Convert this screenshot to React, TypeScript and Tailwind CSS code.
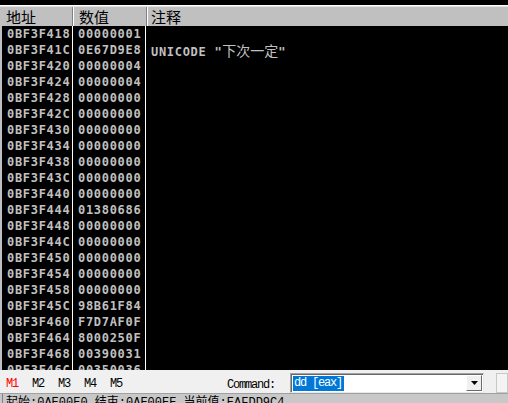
const rows: [string, string, string?][] = [
  ["0BF3F418", "00000001"],
  ["0BF3F41C", "0E67D9E8", "unicode"],
  ["0BF3F420", "00000004"],
  ["0BF3F424", "00000004"],
  ["0BF3F428", "00000000"],
  ["0BF3F42C", "00000000"],
  ["0BF3F430", "00000000"],
  ["0BF3F434", "00000000"],
  ["0BF3F438", "00000000"],
  ["0BF3F43C", "00000000"],
  ["0BF3F440", "00000000"],
  ["0BF3F444", "01380686"],
  ["0BF3F448", "00000000"],
  ["0BF3F44C", "00000000"],
  ["0BF3F450", "00000000"],
  ["0BF3F454", "00000000"],
  ["0BF3F458", "00000000"],
  ["0BF3F45C", "98B61F84"],
  ["0BF3F460", "F7D7AF0F"],
  ["0BF3F464", "8000250F"],
  ["0BF3F468", "00390031"],
  ["0BF3F46C", "00350036"],
]

const mono = "font-['DejaVu_Sans_Mono',monospace] font-bold text-[12px] tracking-[0.7px]"
const small = "font-['Liberation_Mono','Noto_Sans_CJK_SC',monospace] text-[12px] tracking-[-1.2px]"

export default function App() {
  return (
    <div className="w-[508px] h-[403px] overflow-hidden flex flex-col bg-black">
      {/* top strip */}
      <div className="h-[5px] shrink-0 bg-black" />
      <div className="h-[1px] shrink-0 bg-white" />
      <div className="h-[1px] shrink-0 bg-[#e3e3e3]" />

      {/* column header */}
      <div className="h-[19px] shrink-0 flex bg-[#c0c0c0] text-black font-['Noto_Sans_CJK_SC',sans-serif] text-[15px] leading-[19px]">
        <div className="w-[73px] pl-[6px] border-r border-[#808080]">地址</div>
        <div className="w-[74px] pl-[5px] border-l border-white border-r border-r-[#808080]">数值</div>
        <div className="flex-1 pl-[3px] border-l border-white">注释</div>
      </div>

      {/* dump rows */}
      <div className="flex-1 overflow-hidden flex flex-col border-l-2 border-[#c0c0c0] text-[#c0c0c0]">
        {rows.map(([addr, val, note]) => (
          <div key={addr} className={`h-[16px] shrink-0 flex leading-[16px] ${mono}`}>
            <div className="w-[71px] pl-[5px] border-r border-white">{addr}</div>
            <div className="w-[73px] pl-[5px] border-r border-white">{val}</div>
            <div className="flex-1 pl-[5px] whitespace-nowrap">
              {note && (
                <>
                  UNICODE "
                  <span className="font-['Noto_Sans_CJK_SC',sans-serif] font-normal text-[14px] tracking-normal">下次一定</span>
                  "
                </>
              )}
            </div>
          </div>
        ))}
      </div>

      {/* toolbar */}
      <div className="h-[23px] shrink-0 flex bg-[#f0f0f0]">
        <div className={`flex items-center pl-[6px] pt-[4px] gap-[14px] text-black ${small}`}>
          <span className="text-[#ff0000]">M1</span>
          <span>M2</span>
          <span>M3</span>
          <span>M4</span>
          <span>M5</span>
        </div>
        <span className={`ml-[105px] self-center mt-[6px] text-black ${small}`}>Command:</span>
        <div className="ml-[15px] self-end w-[198px] h-[20px] flex items-center bg-white border border-t-[#a0a0a0] border-l-[#a0a0a0] border-r-[#e8e8e8] border-b-[#e8e8e8] shadow-[inset_1px_1px_0_#696969]">
          <span className={`ml-[2px] pl-[1px] pr-[2px] bg-[#0078d7] text-white leading-[15px] ${small}`}>dd [eax]</span>
          <div className="ml-auto mr-[1px] w-[16px] h-[16px] flex items-center justify-center bg-[#f0f0f0] border border-t-white border-l-white border-r-[#696969] border-b-[#696969]">
            <svg width="7" height="4" viewBox="0 0 7 4">
              <path d="M0 0h7L3.5 4z" fill="#000" />
            </svg>
          </div>
        </div>
        <div className="ml-[12px] self-end w-[12px] h-[20px] border border-[#c8c8c8] bg-[#f4f4f4]" />
      </div>

      {/* status bar, clipped by the window edge */}
      <div className="h-[10px] shrink-0 overflow-hidden bg-[#c8c8c8] border-t border-[#a0a0a0] pl-[2px]">
        <div className="h-[18px] border-l border-[#808080] pl-[3px] font-['Liberation_Mono','Noto_Sans_CJK_SC',monospace] text-[12px] leading-[18px] text-black whitespace-nowrap">
          起始:0AE00E0 结束:0AE00EE 当前值:EAFDD9C4
        </div>
      </div>
    </div>
  )
}
